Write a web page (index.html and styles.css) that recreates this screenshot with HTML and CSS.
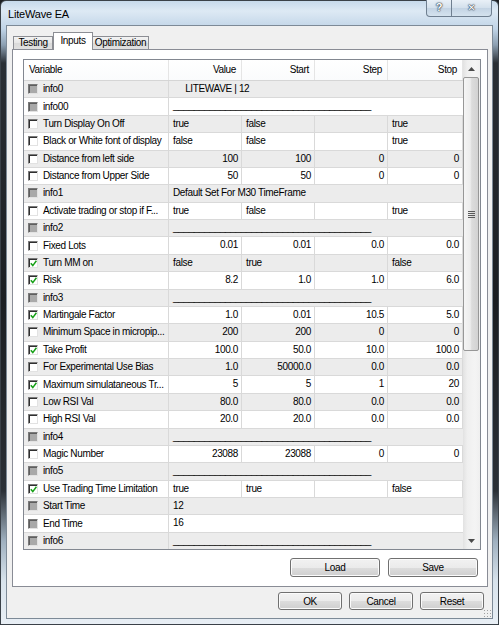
FILE: index.html
```html
<!DOCTYPE html>
<html lang="en">
<head>
    <meta charset="UTF-8">
    <title>LiteWave EA</title>
    <link rel="stylesheet" href="styles.css">
</head>
<body>

<div class="window">
    <div class="titlebar">
        <div class="title">LiteWave EA</div>
        <div class="caption-btns">
            <div class="cap help">?</div>
            <div class="cap close">&#x2715;</div>
        </div>
    </div>

    <div class="client">
        <div class="tabs">
            <div class="tab t-testing">Testing</div>
            <div class="tab t-inputs active">Inputs</div>
            <div class="tab t-opt">Optimization</div>
        </div>

        <div class="panel">
            <div class="list">
                <div class="grid">
                    <div class="head">
                        <div class="c var">Variable</div>
                        <div class="c col num">Value</div>
                        <div class="c col num">Start</div>
                        <div class="c col num">Step</div>
                        <div class="c col last num">Stop</div>
                    </div>
                    <div id="rows"></div>
                </div>
                <div class="scrollbar">
                    <div class="sb-arrow">
                        <svg width="7" height="4" viewBox="0 0 7 4"><path d="M0 4 L3.5 0 L7 4 Z" fill="#4a4a4a"/></svg>
                    </div>
                    <div class="thumb"><span class="grip"></span></div>
                    <div class="track"></div>
                    <div class="sb-arrow">
                        <svg width="7" height="4" viewBox="0 0 7 4"><path d="M0 0 L3.5 4 L7 0 Z" fill="#4a4a4a"/></svg>
                    </div>
                </div>
            </div>
            <div class="panel-btns">
                <button class="btn big">Load</button>
                <button class="btn big">Save</button>
            </div>
        </div>

        <div class="dialog-btns">
            <button class="btn">OK</button>
            <button class="btn">Cancel</button>
            <button class="btn">Reset</button>
        </div>
        <div class="grip-corner"></div>
    </div>
</div>

<script>
    // name, checkbox state, kind, values
    const rows = [
        ['info0', 'dis', 'str', '     LITEWAVE | 12'],
        ['info00', 'dis', 'line'],
        ['Turn Display On Off', 'off', 'bool', ['true', 'false', '', 'true']],
        ['Black or White font of display', 'off', 'bool', ['false', 'false', '', 'true']],
        ['Distance from left side', 'off', 'num', ['100', '100', '0', '0']],
        ['Distance from Upper Side', 'off', 'num', ['50', '50', '0', '0']],
        ['info1', 'dis', 'str', 'Default Set For M30 TimeFrame'],
        ['Activate trading or stop if F...', 'off', 'bool', ['true', 'false', '', 'true']],
        ['info2', 'dis', 'line'],
        ['Fixed Lots', 'off', 'num', ['0.01', '0.01', '0.0', '0.0']],
        ['Turn MM on', 'on', 'bool', ['false', 'true', '', 'false']],
        ['Risk', 'on', 'num', ['8.2', '1.0', '1.0', '6.0']],
        ['info3', 'dis', 'line'],
        ['Martingale Factor', 'on', 'num', ['1.0', '0.01', '10.5', '5.0']],
        ['Minimum Space in micropip...', 'off', 'num', ['200', '200', '0', '0']],
        ['Take Profit', 'on', 'num', ['100.0', '50.0', '10.0', '100.0']],
        ['For Experimental Use Bias', 'off', 'num', ['1.0', '50000.0', '0.0', '0.0']],
        ['Maximum simulataneous Tr...', 'on', 'num', ['5', '5', '1', '20']],
        ['Low RSI Val', 'off', 'num', ['80.0', '80.0', '0.0', '0.0']],
        ['High RSI Val', 'off', 'num', ['20.0', '20.0', '0.0', '0.0']],
        ['info4', 'dis', 'line'],
        ['Magic Number', 'off', 'num', ['23088', '23088', '0', '0']],
        ['info5', 'dis', 'line'],
        ['Use Trading Time Limitation', 'on', 'bool', ['true', 'true', '', 'false']],
        ['Start Time', 'dis', 'str', '12'],
        ['End Time', 'dis', 'str', '16'],
        ['info6', 'dis', 'line']
    ];

    const check = '<svg width="7" height="7" viewBox="0 0 7 7"><path d="M0.8 3.2 L2.8 5.6 L6.4 0.8" fill="none" stroke="#17a017" stroke-width="1.5"/></svg>';
    let html = '';

    rows.forEach(function (r, i) {
        html += '<div class="row' + (i % 2 === 0 ? ' alt' : '') + '">';
        html += '<div class="c var"><span class="cb ' + r[1] + '">' + (r[1] === 'on' ? check : '') + '</span>' + r[0] + '</div>';

        if (r[2] === 'str') {
            html += '<div class="c wide pre">' + r[3] + '</div>';
        } else if (r[2] === 'line') {
            html += '<div class="c wide">' + '_'.repeat(38) + '</div>';
        } else {
            r[3].forEach(function (v, j) {
                html += '<div class="c col' + (r[2] === 'num' ? ' num' : '') + (j === 3 ? ' last' : '') + '">' + v + '</div>';
            });
        }
        html += '</div>';
    });

    document.getElementById('rows').innerHTML = html;
</script>

</body>
</html>
```

FILE: styles.css
```css
body { margin: 0; font-family: "Liberation Sans", Arial, sans-serif; font-size: 10px; letter-spacing: -0.35px; color: #000; background: #1d2024; }

.window { width: 499px; height: 625px; box-sizing: border-box; border: 1px solid #3a4148; border-radius: 6px 6px 0 0; padding: 0 5px 5px 5px; display: flex; flex-direction: column; background: linear-gradient(to bottom, #c6d9eb 0, #dde9f4 10px, #c0d4e7 28px, #8c9fb1 44px, #2a2f35 62px, #1b1e22 300px, #2b3036 490px, #9fb0bf 540px, #d8e3ec 580px, #e9eff5 625px); }

.titlebar { height: 24px; display: flex; justify-content: space-between; align-items: flex-start; }
.title { padding: 7px 0 0 2px; font-size: 11px; letter-spacing: -0.2px; color: #000; }
.caption-btns { display: flex; margin-top: -1px; margin-right: 1px; }
.cap { height: 17px; box-sizing: border-box; border: 1px solid #6f7f90; border-top: none; background: linear-gradient(to bottom, #e9f0f7, #d3e0ec 50%, #c3d3e3 51%, #d4e2ee); color: #fff; font-weight: bold; text-align: center; line-height: 15px; text-shadow: 0 0 1px #2c3a48, 0 0 1px #2c3a48, 0 0 2px #2c3a48; letter-spacing: 0; }
.help { width: 26px; border-radius: 0 0 0 4px; font-size: 11px; }
.close { width: 40px; border-left: none; border-radius: 0 0 4px 0; font-family: "DejaVu Sans", sans-serif; font-size: 10px; }

.client { flex: 1; position: relative; background: #f0f0f0; border: 1px solid #7d8a97; padding: 6px 4px 8px 5px; display: flex; flex-direction: column; }

.tabs { height: 17px; display: flex; align-items: flex-end; padding-left: 1px; position: relative; z-index: 1; }
.tab { height: 13px; box-sizing: border-box; border: 1px solid #8c8e94; border-bottom: none; background: linear-gradient(to bottom, #f3f3f3, #e6e6e6 50%, #dadada 51%, #e0e0e0); text-align: center; line-height: 12px; }
.t-testing { width: 40px; }
.t-inputs { width: 40px; }
.t-opt { width: 57px; margin-left: -1px; }
.tab.active { height: 18px; margin-bottom: -1px; background: #fff; line-height: 16px; }

.panel { height: 538px; box-sizing: border-box; border: 1px solid #898c95; background: #fff; padding: 9px 6px 9px 10px; display: flex; flex-direction: column; }

.list { height: 491px; box-sizing: border-box; border: 1px solid #828790; background: #fff; display: flex; overflow: hidden; }
.grid { width: 439px; overflow: hidden; }

.head { height: 21px; display: flex; border-bottom: 1px solid #d5d5d5; box-sizing: border-box; background: linear-gradient(to bottom, #fff, #fafbfc); }
.head .c { line-height: 20px; border-right-color: #e5e5e5; }
.head .c.var { padding-left: 5px; }
.head .c.num { padding-right: 5px; }

.row { height: 17.38px; box-sizing: border-box; display: flex; border-bottom: 1px solid #d9d9d9; }
.row.alt { background: #ececec; }

.c { box-sizing: border-box; border-right: 1px solid #d9d9d9; padding: 0 3px 0 4px; line-height: 16px; white-space: nowrap; overflow: hidden; }
.c.var { width: 145px; display: flex; align-items: center; gap: 5px; padding-left: 4px; }
.c.col { width: 73px; }
.c.col.last { width: 75px; }
.c.num { text-align: right; }
.c.wide { width: 294px; border-right: none; }
.c.pre { white-space: pre; }

.cb { width: 10px; height: 10px; flex: none; box-sizing: border-box; border: 1px solid; border-color: #7a7a7a #e2e2e2 #e2e2e2 #7a7a7a; box-shadow: inset 1px 1px 0 #303030; background: #fff; display: flex; align-items: center; justify-content: center; padding: 1px 0 0 1px; }
.cb.dis { background: #a9a9a9; box-shadow: inset 1px 1px 0 #5e5e5e; }

.scrollbar { width: 17px; display: flex; flex-direction: column; background: linear-gradient(to right, #e2e2e2, #efefef 25%, #f4f4f4 70%, #efefef); }
.sb-arrow { height: 17px; flex: none; display: flex; align-items: center; justify-content: center; }
.thumb { height: 274px; flex: none; margin: 0 1px 0 0; box-sizing: border-box; border: 1px solid #979797; border-radius: 2px; background: linear-gradient(to right, #f5f5f5, #ececec 45%, #dcdcdc 55%, #d2d2d2); display: flex; align-items: center; justify-content: center; }
.grip { width: 7px; height: 7px; background: repeating-linear-gradient(to bottom, #5a5a5a 0 1px, transparent 1px 2px); }
.track { flex: 1; }

.panel-btns { display: flex; justify-content: flex-end; gap: 8px; margin: 8px 3px 0 0; }
.dialog-btns { display: flex; justify-content: flex-end; gap: 7px; margin: 5px 4px 0 0; }

.btn { width: 64px; height: 18px; padding: 0; box-sizing: border-box; border: 1px solid #707070; border-radius: 3px; background: linear-gradient(to bottom, #f2f2f2, #ebebeb 50%, #dddddd 51%, #cfcfcf); box-shadow: inset 0 0 0 1px #fbfbfb; font-family: inherit; font-size: 10px; letter-spacing: -0.35px; color: #000; }
.btn.big { width: 90px; height: 19px; }

.grip-corner { position: absolute; right: 1px; bottom: 1px; width: 8px; height: 8px; background: radial-gradient(circle, #a0a0a0 0.7px, transparent 1px) 0 0 / 3px 3px; }
```
